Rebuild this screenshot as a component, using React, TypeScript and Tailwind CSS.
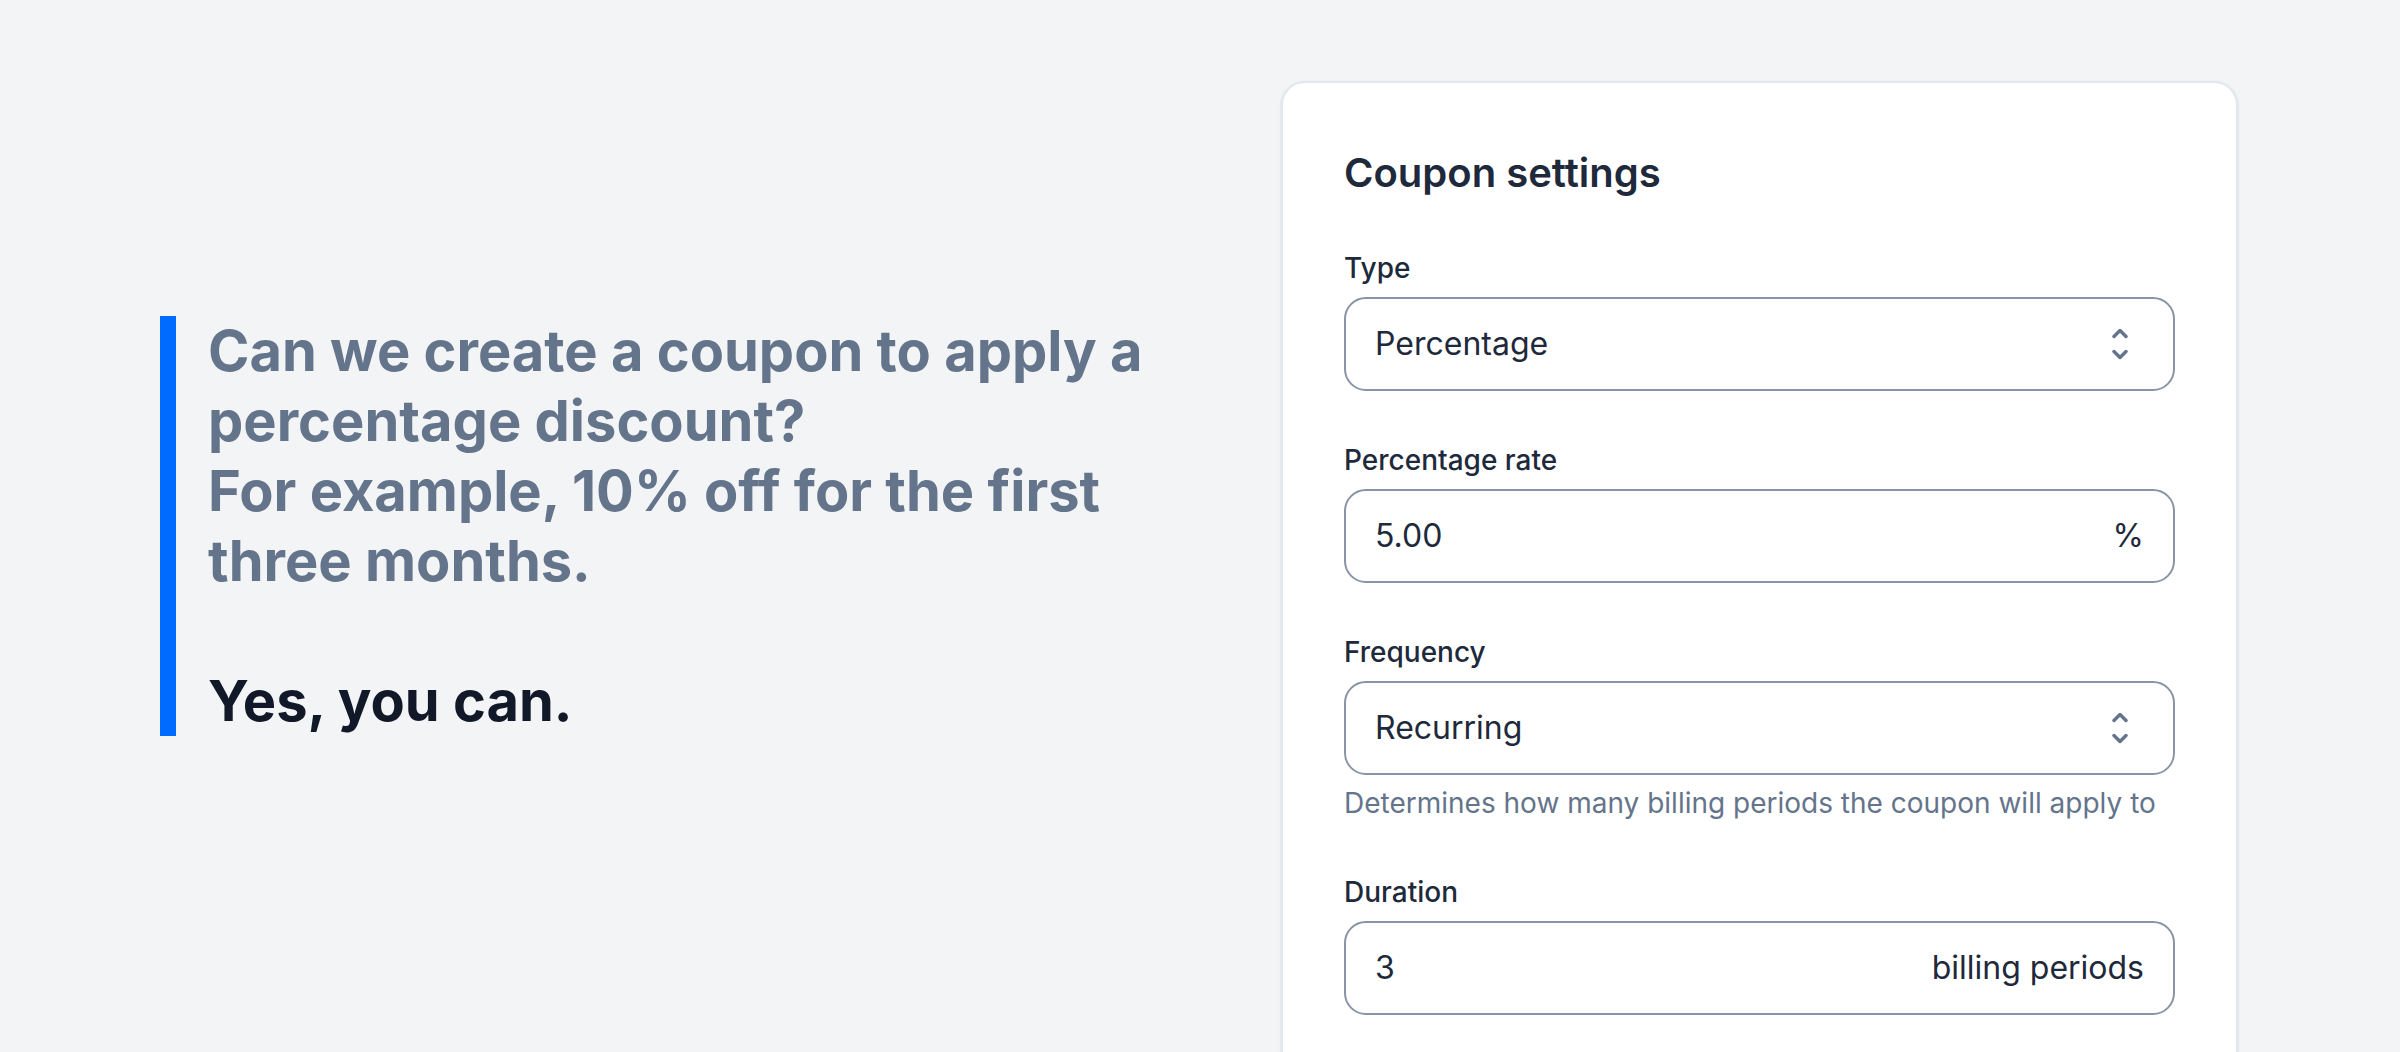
const fieldBox =
  "flex h-[94px] items-center justify-between rounded-[22px] border-2 border-[#8a94a6] bg-white px-[29px] text-[32px] text-[#1e293b]";

function ChevronsUpDown() {
  return (
    <svg width="16" height="32" viewBox="0 0 16 32" fill="none" className="mr-[16px] shrink-0">
      <path
        d="M2 8.5 8 2.5l6 6M2 23.5l6 6 6-6"
        stroke="#64748b"
        strokeWidth="3.4"
        strokeLinecap="round"
        strokeLinejoin="round"
      />
    </svg>
  );
}

function Field({
  label,
  children,
  help,
}: {
  label: string;
  children: React.ReactNode;
  help?: string;
}) {
  return (
    <div>
      <div className="mb-[9px] text-[28px] leading-[40px] font-medium text-[#1e293b]">{label}</div>
      {children}
      {help ? (
        <p className="mt-[8px] text-[28px] leading-[40px] text-[#64748b]">{help}</p>
      ) : null}
    </div>
  );
}

export default function App() {
  return (
    <div className="flex h-screen overflow-hidden bg-[#f3f4f6] pl-[160px] font-['Inter','Noto_Sans',sans-serif]">
      <div className="flex w-[1121px] shrink-0 items-center">
        <div className="border-l-[16px] border-[#006bff] pl-8 text-[56px] leading-[70px] font-bold text-[#64748b]">
          <p>
            Can we create a coupon to apply a
            <br />
            percentage discount?
            <br />
            For example, 10% off for the first
            <br />
            three months.
          </p>
          <p className="mt-[70px] text-[#111827]">Yes, you can.</p>
        </div>
      </div>

      <div className="mt-[81px] w-[957px] shrink-0 self-start rounded-[24px] border-2 border-[#e2e8f0] bg-white px-[61px] pt-[62px] pb-[62px] shadow-sm">
        <h2 className="mb-[47px] text-[40px] leading-[56px] font-semibold text-[#1e293b]">
          Coupon settings
        </h2>

        <div className="flex flex-col gap-[49px]">
          <Field label="Type">
            <div className={fieldBox}>
              <span>Percentage</span>
              <ChevronsUpDown />
            </div>
          </Field>

          <Field label="Percentage rate">
            <div className={fieldBox}>
              <span>5.00</span>
              <span>%</span>
            </div>
          </Field>

          <Field label="Frequency" help="Determines how many billing periods the coupon will apply to">
            <div className={fieldBox}>
              <span>Recurring</span>
              <ChevronsUpDown />
            </div>
          </Field>

          <Field label="Duration">
            <div className={fieldBox}>
              <span>3</span>
              <span>billing periods</span>
            </div>
          </Field>
        </div>
      </div>
    </div>
  );
}
